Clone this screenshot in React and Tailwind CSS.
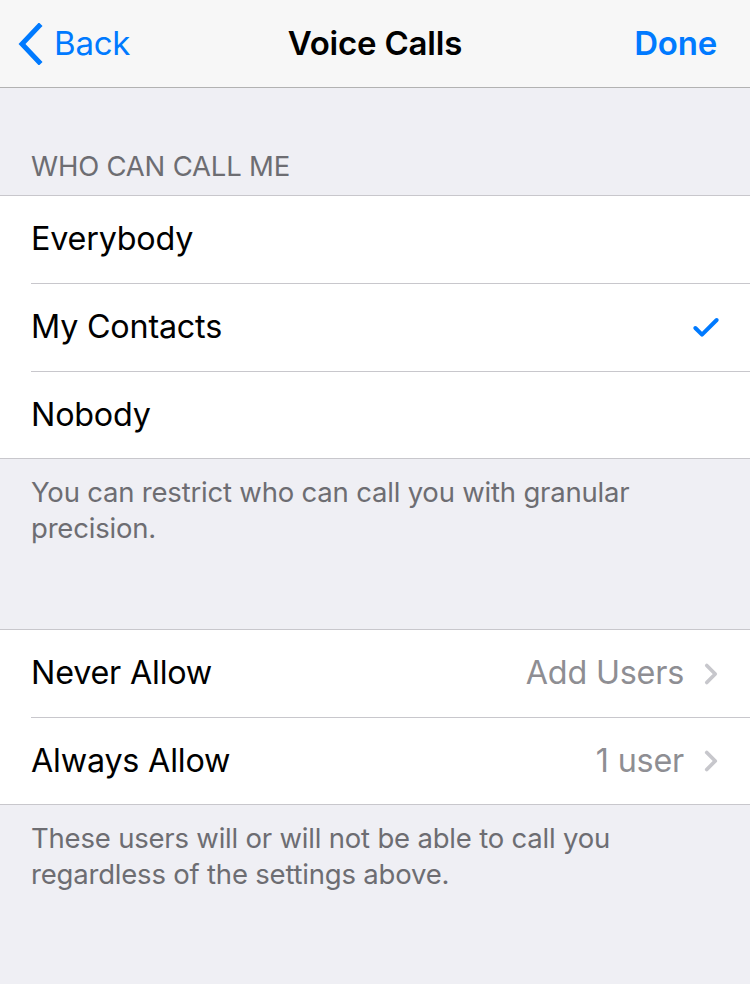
import { Check, ChevronRight } from 'lucide-react';

const Row = ({ label, detail, checked, chevron, last }) => (
	<div className={`flex items-center pl-[31px] ${last ? 'h-[86px]' : 'h-[88px]'}`}>
		<div
			className={`flex h-full flex-1 items-center pr-[30px] ${last ? '' : 'border-b border-[#c8c7cc]'}`}
		>
			<span className="flex-1 text-[32.3px] text-black">{label}</span>
			{detail && <span className="text-[32.3px] text-[#8e8e93]">{detail}</span>}
			{chevron && (
				<ChevronRight className="ml-[10px] -mr-[8px] text-[#c7c7cc]" size={34} strokeWidth={2.6} />
			)}
			{checked && <Check className="-mr-[2px] text-[#007aff]" size={32} strokeWidth={3} />}
		</div>
	</div>
);

const Group = ({ children }) => (
	<div className="border-y border-[#c8c7cc] bg-white">{children}</div>
);

export default function App() {
	return (
		<div className="h-[984px] w-[750px] overflow-hidden bg-[#efeff4] font-['Inter',sans-serif] tracking-[-0.2px]">
			<div className="grid h-[88px] grid-cols-[1fr_auto_1fr] items-center border-b border-[#b2b2b2] bg-[#f7f7f7] px-[17px]">
				<div className="flex items-center gap-[11px] text-[#007aff]">
					<svg width="26" height="42" viewBox="0 0 26 42" fill="none">
						<path d="M22 3 L5 21 L22 39" stroke="#007aff" strokeWidth="5" strokeLinecap="square" />
					</svg>
					<span className="text-[33px]">Back</span>
				</div>
				<span className="text-[33px] font-semibold text-black">Voice Calls</span>
				<span className="justify-self-end pr-[16px] text-[33px] font-semibold text-[#007aff]">Done</span>
			</div>

			<div className="flex h-[107px] items-end pb-[8px] pl-[31px] text-[27.5px] text-[#6d6d72]">
				WHO CAN CALL ME
			</div>
			<Group>
				<Row label="Everybody" />
				<Row label="My Contacts" checked />
				<Row label="Nobody" last />
			</Group>
			<div className="h-[170px] pl-[31px] pr-[20px] pt-[15px] text-[27.5px] leading-[36px] text-[#6d6d72]">
				You can restrict who can call you with granular
				<br />
				precision.
			</div>
			<Group>
				<Row label="Never Allow" detail="Add Users" chevron />
				<Row label="Always Allow" detail="1 user" chevron last />
			</Group>
			<div className="pl-[31px] pr-[20px] pt-[15px] text-[27.5px] leading-[36px] text-[#6d6d72]">
				These users will or will not be able to call you
				<br />
				regardless of the settings above.
			</div>
		</div>
	);
}
